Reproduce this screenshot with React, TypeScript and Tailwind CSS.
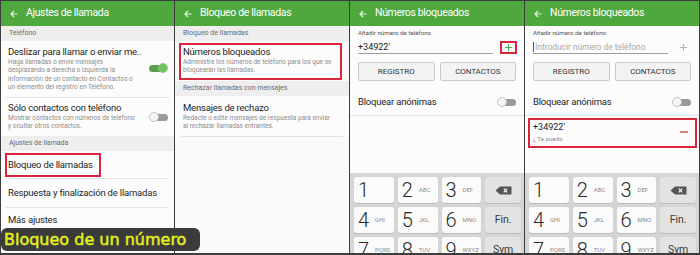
import React from "react";

function Header({ title }: { title: string }) {
  return (
    <div className="h-[25px] shrink-0 bg-[#4fa83d] flex items-center pl-[9px] text-white">
      <svg width="8" height="8" viewBox="0 0 8 8" className="shrink-0">
        <path d="M7.5 4H1M4 1L1 4l3 3" stroke="#e4f3df" strokeWidth="1.2" fill="none" />
      </svg>
      <span className="ml-[8px] text-[10.5px] tracking-[-0.35px] leading-none">{title}</span>
    </div>
  );
}

function Band({ children, className = "" }: { children: React.ReactNode; className?: string }) {
  return (
    <div className={"h-[15px] shrink-0 bg-[#eeeeee] flex items-center pl-[8px] text-[7px] text-[#6b6b6b] whitespace-nowrap " + className}>
      {children}
    </div>
  );
}

function Title({ children }: { children: React.ReactNode }) {
  return <div className="text-[9.5px] tracking-[-0.2px] leading-[12px] text-[#1e1e1e] whitespace-nowrap">{children}</div>;
}

function Desc({ lines }: { lines: string[] }) {
  return (
    <div className="text-[6.5px] leading-[8.3px] text-[#8d8d8d]">
      {lines.map((l) => (
        <div key={l} className="whitespace-nowrap">{l}</div>
      ))}
    </div>
  );
}

function ToggleOn() {
  return (
    <div className="relative w-[19px] h-[10px] flex items-center">
      <div className="w-[17px] h-[7px] rounded-full bg-[#5c9f4d]" />
      <div className="absolute right-0 top-0 w-[10px] h-[10px] rounded-full bg-[#6fc25c] border border-[#8ed27e]" />
    </div>
  );
}

function ToggleOff() {
  return (
    <div className="relative w-[19px] h-[10px] flex items-center justify-end">
      <div className="w-[15px] h-[7px] rounded-full bg-[#9a9a9a]" />
      <div className="absolute left-0 top-0 w-[10px] h-[10px] rounded-full bg-[#f5f5f5] border border-[#c4c4c4]" />
    </div>
  );
}

function Divider({ className = "" }: { className?: string }) {
  return <div className={"h-px shrink-0 bg-[#e3e3e3] " + className} />;
}

function Plus({ color }: { color: string }) {
  return (
    <svg width="7" height="7" viewBox="0 0 7 7">
      <path d="M3.5 0V7M0 3.5H7" stroke={color} strokeWidth="1.1" />
    </svg>
  );
}

function Key({ d, l }: { d: string; l?: string }) {
  return (
    <div className="flex-1 h-[26px] bg-[#fbfbfb] rounded-[3px] flex items-center pl-[4px] shadow-[0_1px_0_#bcbcbc]">
      <span className="w-[17px] text-[20px] font-light text-[#2a2a2a] leading-none">{d}</span>
      {l && <span className="text-[6px] text-[#8a8a8a] leading-none">{l}</span>}
    </div>
  );
}

function FnKey({ children }: { children: React.ReactNode }) {
  return (
    <div className="flex-1 h-[26px] bg-[#e3e3e3] rounded-[3px] flex items-center justify-center text-[10.5px] text-[#3a3a3a] shadow-[0_1px_0_#bcbcbc]">
      {children}
    </div>
  );
}

function Keyboard() {
  return (
    <div className="mt-auto h-[80px] shrink-0 bg-[#d5d5d5] pt-[4px] pl-[4px] pr-[3px] flex flex-col gap-[4px] overflow-hidden">
      <div className="flex gap-[4px]">
        <Key d="1" />
        <Key d="2" l="ABC" />
        <Key d="3" l="DEF" />
        <FnKey>
          <svg width="17" height="9" viewBox="0 0 17 9">
            <path d="M5 0.5H16.5V8.5H5L0.5 4.5Z" fill="#555555" />
            <path d="M8.8 2.6L12.2 6.4M12.2 2.6L8.8 6.4" stroke="#ffffff" strokeWidth="1.2" />
          </svg>
        </FnKey>
      </div>
      <div className="flex gap-[4px]">
        <Key d="4" l="GHI" />
        <Key d="5" l="JKL" />
        <Key d="6" l="MNO" />
        <FnKey>Fin.</FnKey>
      </div>
      <div className="flex gap-[4px]">
        <Key d="7" l="PQRS" />
        <Key d="8" l="TUV" />
        <Key d="9" l="WXYZ" />
        <FnKey>Sym</FnKey>
      </div>
    </div>
  );
}

function BlockedTop({ filled }: { filled: boolean }) {
  return (
    <>
      <div className="mt-[3px] pl-[8px] text-[6.2px] leading-[8px] text-[#555555] whitespace-nowrap">Añadir número de teléfono</div>
      <div className="mt-[4px] flex items-end pl-[8px] pr-[7px]">
        <div className="flex-1 h-[13px] border-b border-[#9e9e9e] flex items-center">
          {filled ? (
            <span className="text-[9px] leading-[12px] text-[#1e1e1e]">+34922'</span>
          ) : (
            <>
              <span className="w-px h-[10px] bg-[#555555]" />
              <span className="ml-px text-[8.4px] leading-[12px] text-[#a9a9a9] whitespace-nowrap">Introducir número de teléfono</span>
            </>
          )}
        </div>
        <div
          className={
            "ml-[7px] w-[17px] h-[13px] border-2 flex items-center justify-center " +
            (filled ? "border-[#d9263b]" : "border-transparent")
          }
        >
          <Plus color={filled ? "#4caf50" : "#b5b5b5"} />
        </div>
      </div>
      <div className="mt-[8px] flex gap-[5px] px-[8px]">
        <div className="flex-1 h-[19px] bg-[#f3f3f3] border border-[#c9c9c9] rounded-[2px] flex items-center justify-center text-[8px] text-[#333333]">
          REGISTRO
        </div>
        <div className="flex-1 h-[19px] bg-[#f3f3f3] border border-[#c9c9c9] rounded-[2px] flex items-center justify-center text-[8px] tracking-[-0.1px] text-[#333333]">
          CONTACTOS
        </div>
      </div>
      <div className="mt-[11px] h-[20px] flex items-center justify-between pl-[8px] pr-[8px]">
        <Title>Bloquear anónimas</Title>
        <ToggleOff />
      </div>
      <Divider className="mt-[3px]" />
    </>
  );
}

export default function App() {
  return (
    <div className="relative w-[700px] h-[255px] flex gap-px bg-[#3d3d3d] pt-px px-px pb-[2px] font-['Roboto',sans-serif] overflow-hidden">
      {/* Panel 1 */}
      <div className="w-[173px] shrink-0 h-full bg-[#fcfcfc] flex flex-col overflow-hidden">
        <Header title="Ajustes de llamada" />
        <Band>Teléfono</Band>
        <div className="h-[56px] shrink-0 flex items-start justify-between pl-[7px] pr-[6px] pt-[5px]">
          <div>
            <Title>Deslizar para llamar o enviar me..</Title>
            <Desc
              lines={[
                "Haga llamadas o envíe mensajes",
                "desplazando a derecha o izquierda la",
                "información de un contacto en Contactos o",
                "un elemento del registro en Teléfono.",
              ]}
            />
          </div>
          <div className="mt-[17px]">
            <ToggleOn />
          </div>
        </div>
        <Divider className="mx-[5px]" />
        <div className="h-[38px] shrink-0 flex items-start justify-between pl-[7px] pr-[6px] pt-[4px]">
          <div>
            <Title>Sólo contactos con teléfono</Title>
            <Desc lines={["Mostrar contactos con números de teléfono", "y ocultar otros contactos."]} />
          </div>
          <div className="mt-[10px]">
            <ToggleOff />
          </div>
        </div>
        <Band>Ajustes de llamada</Band>
        <div className="h-[27px] shrink-0 pt-[2px] pl-[4px]">
          <div className="w-[96px] h-[24px] border-2 border-[#d9263b] flex items-center pl-px">
            <Title>Bloqueo de llamadas</Title>
          </div>
        </div>
        <Divider className="mx-[5px]" />
        <div className="h-[28px] shrink-0 flex items-center pl-[7px]">
          <Title>Respuesta y finalización de llamadas</Title>
        </div>
        <Divider className="mx-[5px]" />
        <div className="pt-[6px] pl-[7px]">
          <Title>Más ajustes</Title>
        </div>
      </div>

      {/* Panel 2 */}
      <div className="w-[174px] shrink-0 h-full bg-[#fafafa] flex flex-col overflow-hidden">
        <Header title="Bloqueo de llamadas" />
        <Band>Bloqueo de llamadas</Band>
        <div className="mt-[2px] ml-[4px] w-[163px] h-[37px] shrink-0 border-2 border-[#d9263b] pt-px pl-[2px] bg-[#fcfcfc]">
          <Title>Números bloqueados</Title>
          <Desc lines={["Administre los números de teléfono para los que se", "bloquearán las llamadas."]} />
        </div>
        <Band className="mt-px">Rechazar llamadas con mensajes</Band>
        <div className="h-[40px] shrink-0 pt-[6px] pl-[8px] bg-[#fcfcfc]">
          <Title>Mensajes de rechazo</Title>
          <Desc lines={["Redacte o edite mensajes de respuesta para enviar", "al rechazar llamadas entrantes."]} />
        </div>
        <Divider className="mx-[6px]" />
      </div>

      {/* Panel 3 */}
      <div className="w-[174px] shrink-0 h-full bg-[#fcfcfc] flex flex-col overflow-hidden">
        <Header title="Números bloqueados" />
        <BlockedTop filled />
        <Keyboard />
      </div>

      {/* Panel 4 */}
      <div className="w-[174px] shrink-0 h-full bg-[#fcfcfc] flex flex-col overflow-hidden">
        <Header title="Números bloqueados" />
        <BlockedTop filled={false} />
        <div className="mt-[2px] ml-[3px] w-[169px] h-[30px] shrink-0 border-2 border-[#d9263b] flex items-start justify-between">
          <div className="pt-px pl-[3px]">
            <div className="text-[9px] leading-[12px] text-[#1e1e1e]">+34922'</div>
            <div className="mt-[2px] text-[6.2px] leading-[8px] text-[#8d8d8d]">¿ Te puedo</div>
          </div>
          <div className="mt-[11px] mr-[7px] w-[8px] h-[1.5px] bg-[#e57d86]" />
        </div>
        <Keyboard />
      </div>

      {/* Caption overlay */}
      <div className="absolute left-[1px] top-[228px] h-[23px] w-[199px] rounded-[6px] bg-[#3b3b3b] flex items-center pl-[3px] text-[16px] leading-none text-[#e2ef1f] [-webkit-text-stroke:0.5px_#e2ef1f] font-['DejaVu_Sans',sans-serif] whitespace-nowrap">
        Bloqueo de un número
      </div>
    </div>
  );
}
